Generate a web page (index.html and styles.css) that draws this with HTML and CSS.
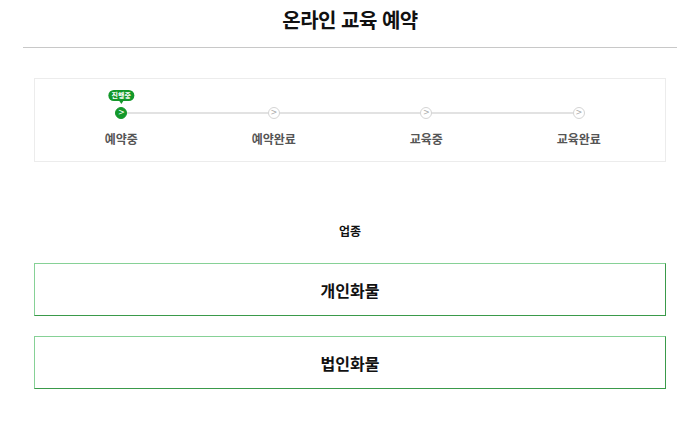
FILE: index.html
```html
<!DOCTYPE html>
<html lang="ko">
<head>
<meta charset="utf-8">
<link rel="stylesheet" href="styles.css">
</head>
<body>
<header class="top">
  <h1 class="title">온라인 교육 예약</h1>
</header>
<section class="steps">
  <ol class="step-list">
    <li class="step active">
      <span class="badge">진행중</span>
      <span class="dot">&gt;</span>
      <span class="label">예약중</span>
    </li>
    <li class="step">
      <span class="dot">&gt;</span>
      <span class="label">예약완료</span>
    </li>
    <li class="step">
      <span class="dot">&gt;</span>
      <span class="label">교육중</span>
    </li>
    <li class="step">
      <span class="dot">&gt;</span>
      <span class="label">교육완료</span>
    </li>
  </ol>
</section>
<h2 class="section-title">업종</h2>
<div class="choices">
  <button class="choice">개인화물</button>
  <button class="choice">법인화물</button>
</div>
</body>
</html>
```
FILE: styles.css
```css
* { box-sizing: border-box; }
html, body { margin: 0; padding: 0; background: #fff; }
body {
  font-family: "Noto Sans CJK KR", "Noto Sans", sans-serif;
  color: #111;
  padding: 0 23px;
}
.top {
  border-bottom: 1px solid #c8c8c8;
  height: 48px;
  display: flex;
  justify-content: center;
  align-items: flex-start;
}
.title {
  margin: 6px 0 0;
  font-size: 20px;
  font-weight: 700;
  line-height: 28px;
  letter-spacing: -0.5px;
}
.steps {
  margin: 30px 11px 0;
  border: 1px solid #ececec;
  height: 84px;
  padding: 0 10px;
}
.step-list {
  list-style: none;
  margin: 0;
  padding: 0;
  display: grid;
  grid-template-columns: repeat(4, 1fr);
  position: relative;
}
.step-list::before {
  content: "";
  position: absolute;
  left: 12.5%;
  right: 12.5%;
  top: 33px;
  height: 2px;
  background: #e2e2e2;
}
.step {
  display: flex;
  flex-direction: column;
  align-items: center;
  position: relative;
  padding-top: 28px;
}
.dot {
  position: relative;
  width: 12px;
  height: 12px;
  border-radius: 50%;
  border: 1px solid #d4d4d4;
  background: #fff;
  color: #aaa;
  font-size: 8px;
  line-height: 10px;
  text-align: center;
  font-family: "DejaVu Sans", sans-serif;
}
.active .dot {
  background: #13982a;
  border-color: #13982a;
  color: #fff;
}
.badge {
  position: absolute;
  top: 11px;
  left: 50%;
  transform: translateX(-50%);
  background: #13982a;
  color: #fff;
  font-size: 7px;
  font-weight: 700;
  line-height: 11px;
  height: 11px;
  padding: 0 3px;
  border-radius: 6px;
  white-space: nowrap;
}
.badge::after {
  content: "";
  position: absolute;
  left: 50%;
  bottom: -3px;
  margin-left: -2px;
  border-left: 2px solid transparent;
  border-right: 2px solid transparent;
  border-top: 3px solid #13982a;
}
.label {
  margin-top: 12px;
  font-size: 12px;
  font-weight: 700;
  color: #555;
  line-height: 16px;
}
.section-title {
  margin: 61px 0 0;
  text-align: center;
  font-size: 12px;
  font-weight: 700;
  line-height: 16px;
}
.choices {
  margin: 24px 11px 0;
  display: flex;
  flex-direction: column;
  gap: 20px;
}
.choice {
  height: 53px;
  background: #fff;
  border: 1px solid;
  border-color: #86d196 #3a9a4a #3a9a4a #86d196;
  font-family: "Noto Sans CJK KR", "Noto Sans", sans-serif;
  font-size: 16px;
  font-weight: 700;
  color: #111;
  padding: 0;
}
```
